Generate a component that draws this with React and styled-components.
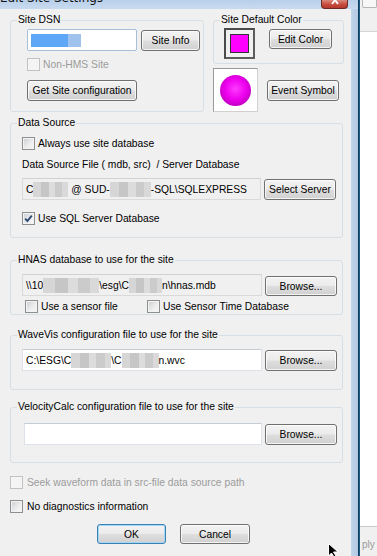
import React from "react";
import styled, { createGlobalStyle } from "styled-components";

const GlobalStyle = createGlobalStyle`
    body{
        margin: 0;
        font-family: "Liberation Sans", Arial, sans-serif;
        font-size: 10.3px;
        color: #000;
    }
`;

const Screen = styled.div`
    position: relative;
    width: 377px;
    height: 556px;
    overflow: hidden;
    display: flex;
    background: #fff;
`;

// 편집 대화상자 (Win7 창 테두리 포함)
const DialogWindow = styled.div`
    width: 358px;
    flex: none;
    display: flex;
    flex-direction: column;
    background: linear-gradient(90deg, #b7cde6 0%, #c9dbef 97%, #b2c9e3 100%);
`;

const TitleBar = styled.div`
    height: 9px;
    flex: none;
    display: flex;
    align-items: flex-start;
    justify-content: space-between;
    overflow: hidden;
    background: linear-gradient(#b9d0ea, #c8daef);
`;

const TitleText = styled.div`
    margin-top: -9px;
    font-family: "DejaVu Sans", sans-serif;
    font-size: 12px;
    line-height: 15px;
    color: #111;
`;

const CloseButton = styled.div`
    width: 27px;
    height: 9px;
    margin-right: 10px;
    box-sizing: border-box;
    border: 1px solid #6d2a25;
    border-top: none;
    border-radius: 0 0 4px 4px;
    background: linear-gradient(#d98a7c, #c4473a 60%, #b53a2e);
    display: flex;
    justify-content: center;
    overflow: hidden;
`;

const FrameBody = styled.div`
    flex: 1;
    display: flex;
    padding-right: 7px;
`;

const Client = styled.div`
    width: 351px;
    flex: none;
    box-sizing: border-box;
    padding: 5px 8px 0 10px;
    background: #f0f0f0;
    display: flex;
    flex-direction: column;
    align-items: flex-start;
`;

const FrameEdge = styled.div`
    width: 2px;
    flex: none;
    background: linear-gradient(90deg, #0f2a44, #1d6f9e);
`;

const BehindWindow = styled.div`
    flex: 1;
    display: flex;
    flex-direction: column;
    background: #fff;
`;

const BehindTop = styled.div`
    height: 31px;
    background: #f0f0f0;
    border-bottom: 1px solid #d5d5d5;
    padding-left: 2px;
`;

const BehindTab = styled.div`
    height: 7px;
    border: 1px solid #b5b5b5;
    border-top: none;
    border-radius: 0 0 2px 2px;
    background: #f7f7f7;
`;

const BehindBottom = styled.div`
    margin-top: auto;
    height: 30px;
    box-sizing: border-box;
    border-top: 1px solid #c9c9c9;
    background: #f0f0f0;
    display: flex;
    align-items: flex-end;
    padding: 0 0 6px 2px;
    color: #9a9a9a;
    font-size: 10px;
`;

// 그룹박스
const Group = styled.fieldset`
    box-sizing: border-box;
    width: ${p => p.$w}px;
    margin: ${p => p.$mt || 0}px 0 0 0;
    padding: 0;
    min-width: 0;
    border: 1px solid #d5dfe5;
    border-radius: 3px;
    legend{
        margin-left: 6px;
        padding: 0 1px;
        line-height: 12px;
        white-space: nowrap;
    }
`;

const GroupBody = styled.div`
    padding: ${p => p.$pad};
    display: flex;
    flex-direction: column;
    align-items: flex-start;
`;

const Row = styled.div`
    display: flex;
    align-items: ${p => p.$align || "flex-end"};
    gap: ${p => p.$gap || 0}px;
    margin-top: ${p => p.$mt || 0}px;
    padding-left: ${p => p.$indent || 0}px;
`;

const Button = styled.button`
    box-sizing: border-box;
    width: ${p => p.$w}px;
    height: ${p => p.$h || 21}px;
    margin: ${p => p.$mt || 0}px 0 0 0;
    padding: 0;
    flex: none;
    font: inherit;
    color: #000;
    white-space: nowrap;
    border: 1px solid ${p => p.$focus ? "#3c7fb1" : "#707070"};
    border-radius: 3px;
    background: linear-gradient(#f3f3f3 0%, #ebebeb 48%, #dedede 52%, #d0d0d0 100%);
    box-shadow: inset 0 0 0 1px ${p => p.$focus ? "#9fd9f7" : "rgba(255,255,255,0.75)"};
`;

const TextField = styled.div`
    box-sizing: border-box;
    width: ${p => p.$w}px;
    height: 22px;
    flex: none;
    display: flex;
    align-items: center;
    padding-left: 3px;
    overflow: hidden;
    white-space: nowrap;
    background: ${p => p.$readOnly ? "#f0f0f0" : "#fff"};
    border: 1px solid ${p => p.$readOnly ? "#dadada" : "#dde2e8"};
    border-top-color: ${p => p.$readOnly ? "#d2d2d2" : "#c6ccd4"};
    ${p => p.$focus && "border-color: #a7bfd8; border-radius: 2px;"}
`;

const Selection = styled.span`
    display: inline-block;
    width: 50px;
    height: 13px;
    background: linear-gradient(90deg, #5ea7f7 0%, #5ea7f7 74%, #9fc3ec 74%);
`;

const Blur = styled.span`
    display: inline-block;
    width: ${p => p.$w}px;
    height: 15px;
    flex: none;
    background:
        linear-gradient(90deg, #d6d6d6 0 22%, #c6c6c6 22% 45%, #dcdcdc 45% 63%, #cbcbcb 63% 84%, #d9d9d9 84%);
`;

const CheckWrap = styled.label`
    display: flex;
    align-items: center;
    gap: ${p => p.$gap || 3}px;
    height: 13px;
    width: ${p => p.$w ? `${p.$w}px` : "auto"};
    flex: none;
    margin-top: ${p => p.$mt || 0}px;
    color: ${p => p.$disabled ? "#9c9c9c" : "#000"};
    white-space: nowrap;
`;

const CheckBox = styled.span`
    box-sizing: border-box;
    width: 13px;
    height: 13px;
    flex: none;
    display: flex;
    align-items: center;
    justify-content: center;
    border: 1px solid ${p => p.$disabled ? "#c2c2c2" : "#8e8f8f"};
    box-shadow: inset 0 0 0 1px ${p => p.$disabled ? "#f6f6f6" : "#f3f3f3"};
    background: ${p => p.$disabled ? "#f4f4f4" : "linear-gradient(135deg, #c9ced4 0%, #eeeeee 60%, #f8f8f8 100%)"};
`;

const Label = styled.div`
    margin-top: ${p => p.$mt || 0}px;
    line-height: 13px;
    white-space: nowrap;
`;

const Swatch = styled.div`
    box-sizing: border-box;
    width: 31px;
    height: 31px;
    flex: none;
    display: flex;
    align-items: center;
    justify-content: center;
    border: 2px solid #4a4a4a;
    border-right-color: #5c5c5c;
    border-bottom-color: #5c5c5c;
    background: #f0f0f0;
`;

const SwatchColor = styled.div`
    width: 17px;
    height: 17px;
    border: 1px solid #333;
    background: ${p => p.$color};
`;

const SymbolBox = styled.div`
    box-sizing: border-box;
    width: 45px;
    height: 44px;
    flex: none;
    display: flex;
    align-items: center;
    justify-content: center;
    background: #fff;
    border: 1px solid #9a9a9a;
    border-right-color: #d0d0d0;
    border-bottom-color: #d0d0d0;
`;

const Symbol = styled.div`
    width: 31px;
    height: 31px;
    border-radius: 50%;
    background: radial-gradient(circle at 50% 45%, #ff3cff 0%, #ee00ee 45%, #b000b0 85%, #8a008a 100%);
`;

const RightCol = styled.div`
    display: flex;
    flex-direction: column;
`;

const Cursor = styled.svg`
    position: absolute;
    left: 328px;
    top: 543px;
`;

const Check = ({ label, checked, disabled, mt, gap, w }) => (
    <CheckWrap $disabled={disabled} $mt={mt} $gap={gap} $w={w}>
        <CheckBox $disabled={disabled}>
            {checked && (
                <svg width="9" height="9" viewBox="0 0 9 9">
                    <path d="M1.2 4.6 L3.4 7 L7.8 1.6" fill="none" stroke="#2d4a74" strokeWidth="1.9" />
                </svg>
            )}
        </CheckBox>
        {label}
    </CheckWrap>
);

const App = () => {
    return (
        <Screen>
            <GlobalStyle />
            <DialogWindow>
                <TitleBar>
                    <TitleText>Edit Site Settings</TitleText>
                    <CloseButton>
                        <svg width="10" height="8" viewBox="0 0 10 8">
                            <path d="M2 -4 L8 4 M8 -4 L2 4" stroke="#fff" strokeWidth="1.8" />
                        </svg>
                    </CloseButton>
                </TitleBar>
                <FrameBody>
                    <Client>
                        <Row $align="flex-start" $gap={9}>
                            <Group $w={194}>
                                <legend>Site DSN</legend>
                                <GroupBody $pad="3px 0 10px 16px">
                                    <Row $gap={4}>
                                        <TextField $w={110} $focus>
                                            <Selection />
                                        </TextField>
                                        <Button $w={59}>Site Info</Button>
                                    </Row>
                                    <Check label="Non-HMS Site" disabled mt={7} />
                                    <Button $w={110} $mt={9}>Get Site configuration</Button>
                                </GroupBody>
                            </Group>
                            <RightCol>
                                <Group $w={131}>
                                    <legend>Site Default Color</legend>
                                    <GroupBody $pad="2px 0 4px 10px">
                                        <Row $align="flex-start" $gap={14}>
                                            <Swatch>
                                                <SwatchColor $color="#ff00ff" />
                                            </Swatch>
                                            <Button $w={63} $h={20} $mt={1}>Edit Color</Button>
                                        </Row>
                                    </GroupBody>
                                </Group>
                                <Row $align="center" $gap={9} $mt={4}>
                                    <SymbolBox>
                                        <Symbol />
                                    </SymbolBox>
                                    <Button $w={72}>Event Symbol</Button>
                                </Row>
                            </RightCol>
                        </Row>

                        <Group $w={333} $mt={5}>
                            <legend>Data Source</legend>
                            <GroupBody $pad="8px 0 12px 11px">
                                <Check label="Always use site database" />
                                <Label $mt={8}>Data Source File ( mdb, src)&nbsp; / Server Database</Label>
                                <Row $gap={3} $mt={7}>
                                    <TextField $w={239} $readOnly>
                                        C<Blur $w={35} />&nbsp;@ SUD-<Blur $w={41} />-SQL\SQLEXPRESS
                                    </TextField>
                                    <Button $w={72}>Select Server</Button>
                                </Row>
                                <Check label="Use SQL Server Database" checked mt={12} />
                            </GroupBody>
                        </Group>

                        <Group $w={333} $mt={16}>
                            <legend>HNAS database to use for the site</legend>
                            <GroupBody $pad="8px 0 1px 11px">
                                <Row $gap={3}>
                                    <TextField $w={240} $readOnly>
                                        \\10<Blur $w={56} />\esg\C<Blur $w={33} />n\hnas.mdb
                                    </TextField>
                                    <Button $w={72} $h={20}>Browse...</Button>
                                </Row>
                                <Row $align="center" $mt={4} $indent={3}>
                                    <Check label="Use a sensor file" w={122} />
                                    <Check label="Use Sensor Time Database" />
                                </Row>
                            </GroupBody>
                        </Group>

                        <Group $w={333} $mt={14}>
                            <legend>WaveVis configuration file to use for the site</legend>
                            <GroupBody $pad="8px 0 18px 11px">
                                <Row $gap={3}>
                                    <TextField $w={240}>
                                        C:\ESG\C<Blur $w={40} />\C<Blur $w={37} />n.wvc
                                    </TextField>
                                    <Button $w={72}>Browse...</Button>
                                </Row>
                            </GroupBody>
                        </Group>

                        <Group $w={333} $mt={11}>
                            <legend>VelocityCalc configuration file to use for the site</legend>
                            <GroupBody $pad="10px 0 17px 13px">
                                <Row $gap={3}>
                                    <TextField $w={238} />
                                    <Button $w={72}>Browse...</Button>
                                </Row>
                            </GroupBody>
                        </Group>

                        <Check label="Seek waveform data in src-file data source path" disabled mt={13} gap={4} />
                        <Check label="No diagnostics information" mt={11} gap={4} />

                        <Row $gap={14} $mt={11} $indent={87}>
                            <Button $w={69} $h={20} $focus>OK</Button>
                            <Button $w={70} $h={20}>Cancel</Button>
                        </Row>
                    </Client>
                </FrameBody>
            </DialogWindow>
            <FrameEdge />
            <BehindWindow>
                <BehindTop>
                    <BehindTab />
                </BehindTop>
                <BehindBottom>ply</BehindBottom>
            </BehindWindow>
            <Cursor width="12" height="14" viewBox="0 0 12 14">
                <path d="M0.5 0.5 L0.5 13 L3.5 10 L6 14 L8 13 L5.5 9 L10 9 Z" fill="#000" stroke="#fff" strokeWidth="1" />
            </Cursor>
        </Screen>
    );
};

export default App;
